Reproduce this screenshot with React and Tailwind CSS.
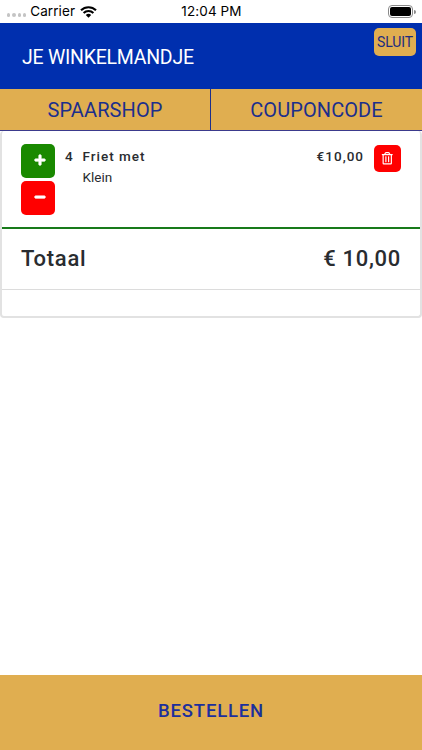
import { FaPlus, FaMinus, FaRegTrashAlt } from 'react-icons/fa';

const items = [{ aantal: 4, naam: 'Friet met', optie: 'Klein', prijs: '€10,00' }];

function StatusBar() {
  return (
    <div className="h-[23px] shrink-0 grid grid-cols-3 items-center pl-[7px] pr-[6px] font-['Inter',sans-serif] text-[13.5px] text-black">
      <div className="flex items-center">
        <div className="flex gap-[2px] pt-[7px]">
          <span className="size-[3.3px] rounded-full bg-[#c4c4c4]" />
          <span className="size-[3.3px] rounded-full bg-[#c4c4c4]" />
          <span className="size-[3.3px] rounded-full bg-[#c4c4c4]" />
          <span className="size-[3.3px] rounded-full bg-[#c4c4c4]" />
        </div>
        <span className="ml-[4px] leading-[23px] tracking-[0.1px]">Carrier</span>
        <svg className="ml-[5px] w-[17px] h-[12px]" viewBox="0 0 17 12">
          <path
            d="M1 4.3a10.7 10.7 0 0 1 15 0M3.6 7a7 7 0 0 1 9.8 0"
            fill="none"
            stroke="black"
            strokeWidth="2.1"
          />
          <path d="M5.8 9.1a3.9 3.9 0 0 1 5.4 0L8.5 11.8z" fill="black" />
        </svg>
      </div>
      <span className="text-center leading-[23px] tracking-[0.1px]">12:04 PM</span>
      <div className="flex items-center justify-end">
        <div className="w-[25px] h-[13px] rounded-[4px] border border-[#8a8a8a] p-[1px]">
          <div className="h-full rounded-[2px] bg-black" />
        </div>
        <span className="ml-px w-[1.5px] h-[4px] rounded-r-full bg-[#8a8a8a]" />
      </div>
    </div>
  );
}

function CartItem({ item }) {
  return (
    <div className="h-[98px] flex items-start pl-[19px] pr-[19px] pt-[13px] border-b-2 border-[#187a1a]">
      <div className="flex flex-col gap-[3px]">
        <button className="w-[34px] h-[34px] rounded-[5px] bg-[#198900] text-white flex items-center justify-center pl-[4px] pb-[2px]">
          <FaPlus size={12} stroke="currentColor" strokeWidth={36} />
        </button>
        <button className="w-[34px] h-[34px] rounded-[5px] bg-[#ff0000] text-white flex items-center justify-center pl-[4px] pb-[2px]">
          <FaMinus size={12} stroke="currentColor" strokeWidth={36} />
        </button>
      </div>
      <span className="ml-[10px] w-[17.5px] text-[13.5px] leading-[24px] font-medium">{item.aantal}</span>
      <div className="flex-1">
        <p className="text-[13.5px] leading-[24px] font-medium tracking-[1px]">{item.naam}</p>
        <p className="text-[13.5px] leading-[19px]">{item.optie}</p>
      </div>
      <span className="text-[13.5px] leading-[24px] font-medium tracking-[1px]">{item.prijs}</span>
      <button className="ml-[10px] mt-px w-[27px] h-[27px] rounded-[5px] bg-[#ff0000] text-white flex items-center justify-center">
        <FaRegTrashAlt size={12.5} />
      </button>
    </div>
  );
}

function App() {
  return (
    <div className="h-screen flex flex-col overflow-hidden bg-white font-['Roboto',sans-serif] text-[#292c30]">
      <StatusBar />

      <header className="h-[66px] shrink-0 flex items-start justify-between bg-[#002fae] pl-[22px] pr-[6px]">
        <h1 className="mt-[23px] text-[19.5px] leading-[24px] tracking-[-0.25px] text-white">JE WINKELMANDJE</h1>
        <button className="mt-[5px] w-[42px] h-[28px] rounded-[5px] bg-[#e0ae50] pt-px text-[14px] tracking-[-0.1px] text-[#1c2c80]">
          SLUIT
        </button>
      </header>

      <nav className="h-[42px] shrink-0 flex border-b border-[#3b3a8c] bg-[#e0ae50] text-[20px] tracking-[0.1px] text-[#1c2f8c]">
        <button className="w-[211px] border-r border-[#1c2f8c]">SPAARSHOP</button>
        <button className="flex-1">COUPONCODE</button>
      </nav>

      <main className="flex-1">
        <div className="h-[187px] rounded-[4px] border-x-2 border-b-2 border-[#e2e2e2]">
          {items.map((item) => (
            <CartItem key={item.naam} item={item} />
          ))}
          <div className="h-[61px] flex items-center justify-between px-[19px] pb-[2px] border-b border-[#dcdcdc] text-[22px] font-medium tracking-[0.7px]">
            <span>Totaal</span>
            <span>€ 10,00</span>
          </div>
        </div>
      </main>

      <button className="h-[75px] shrink-0 bg-[#e0ae50] text-[18.5px] font-medium tracking-[0.8px] text-[#1c2f9c] pb-[2px]">
        BESTELLEN
      </button>
    </div>
  );
}

export default App;
